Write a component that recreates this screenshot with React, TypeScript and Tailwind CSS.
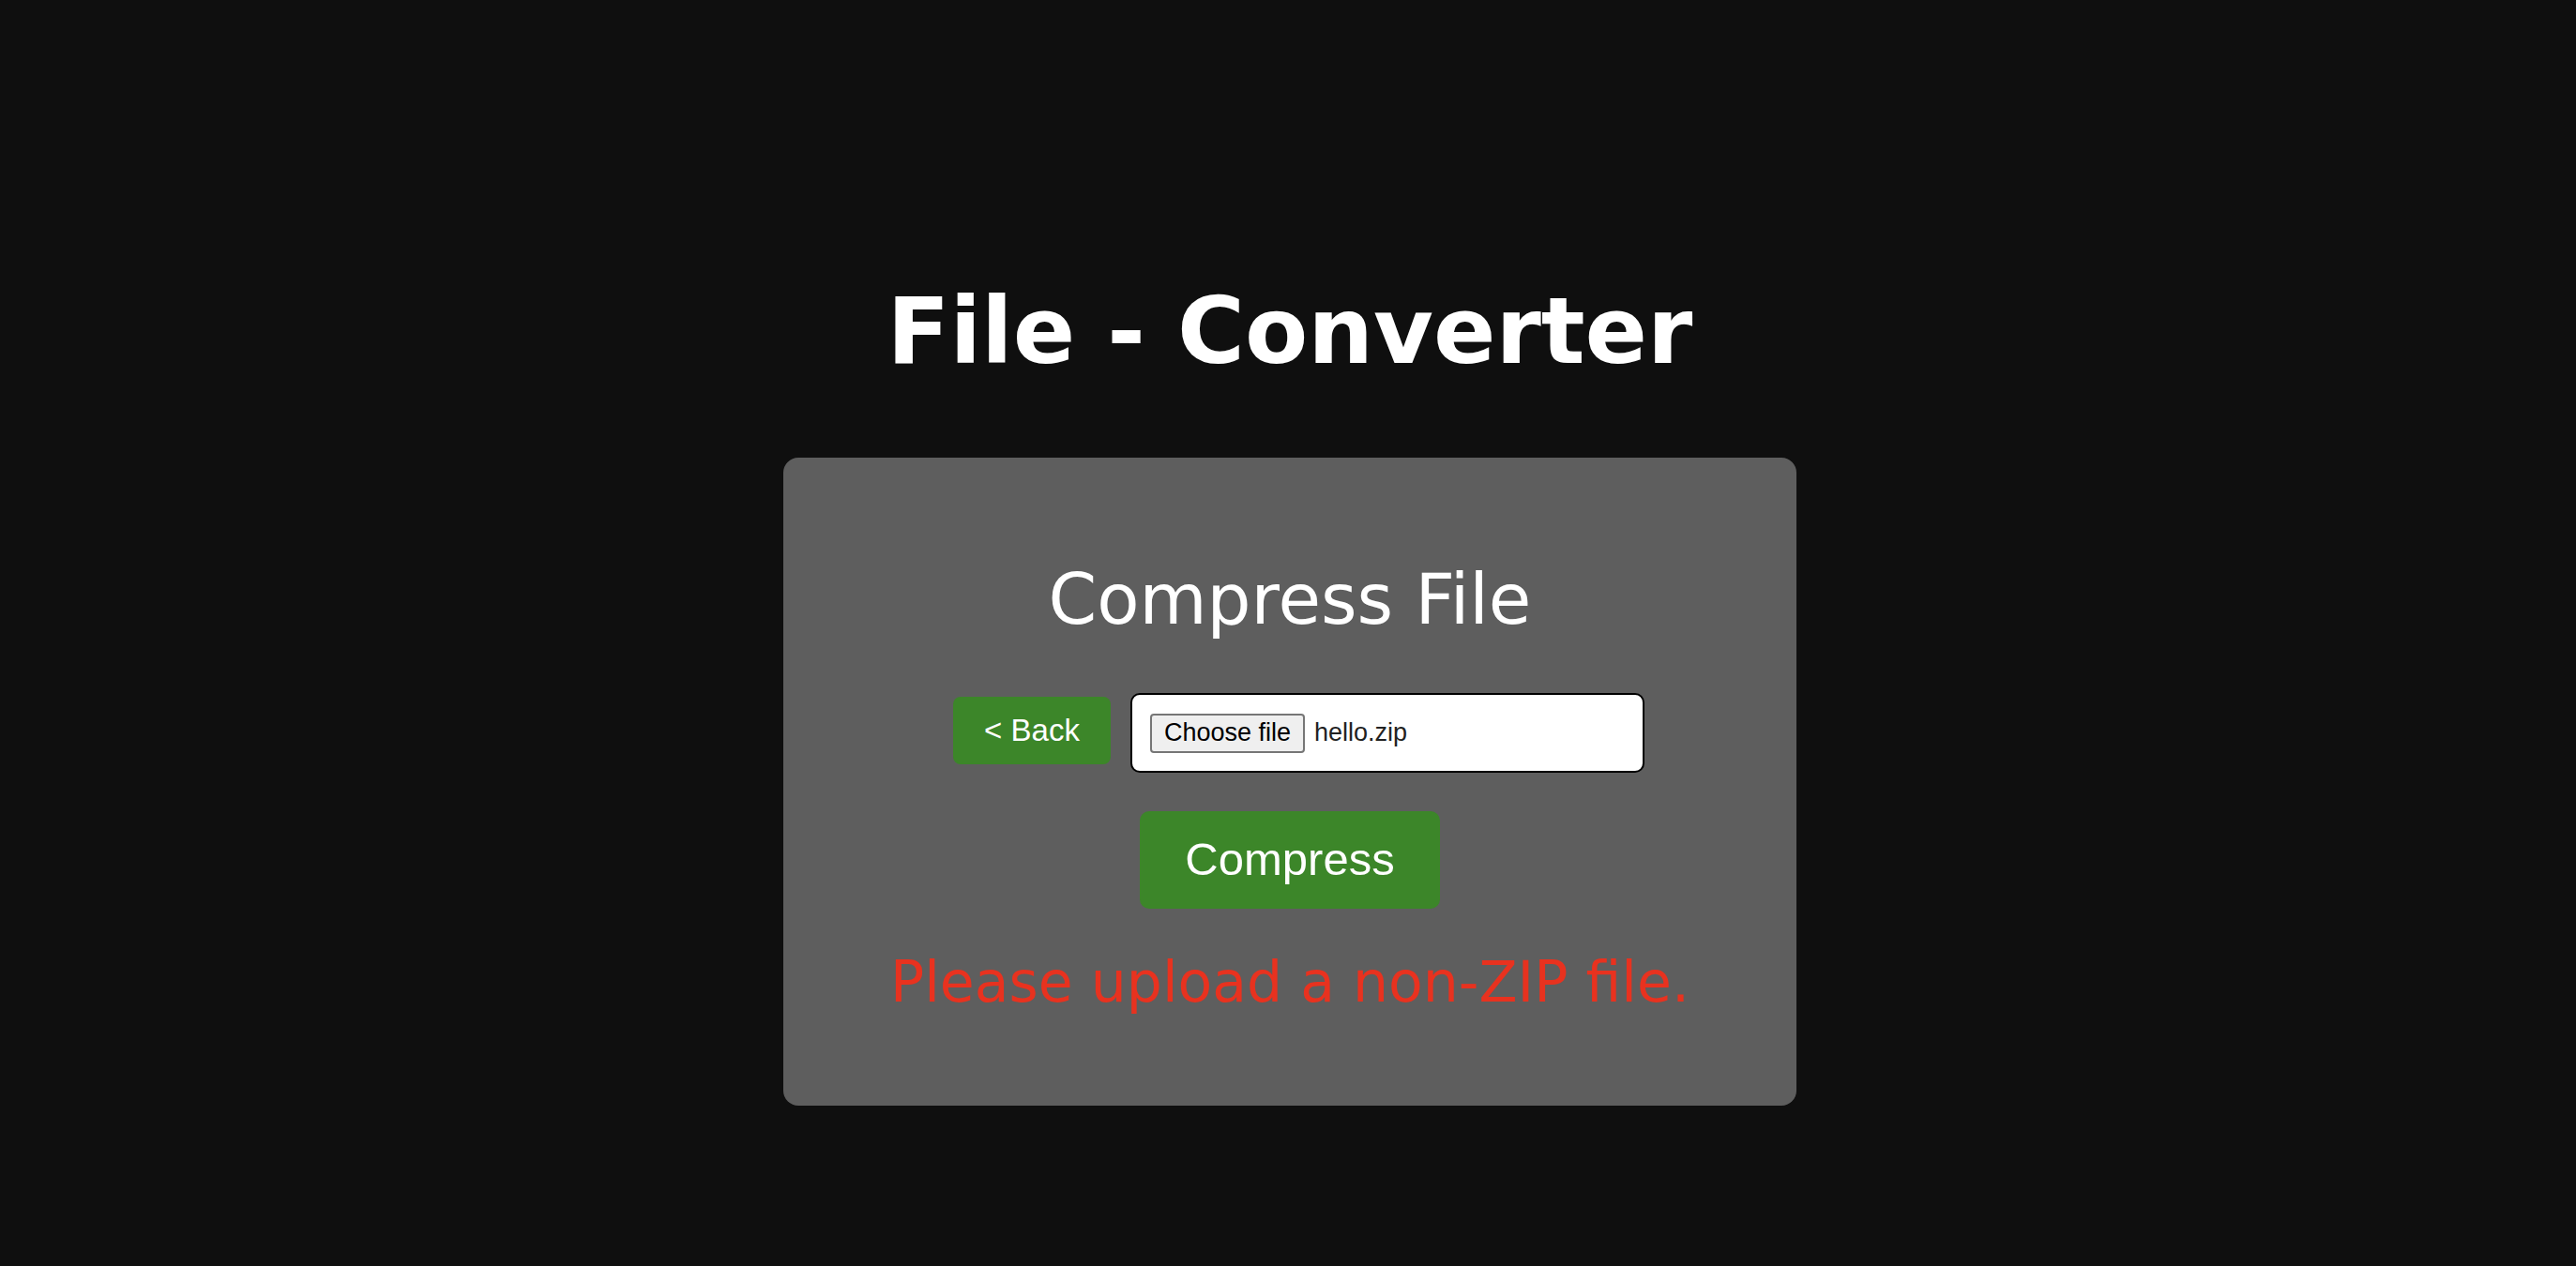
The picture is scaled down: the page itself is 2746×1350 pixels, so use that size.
export default function App() {
  return (
    <div className="min-h-[1350px] w-full bg-[#0f0f0f] pt-[304px] pl-[4px] flex flex-col items-center">
      <h1 className="text-[98px] leading-none font-bold text-white font-['DejaVu_Sans',sans-serif]">
        File - Converter
      </h1>

      <div className="mt-[86px] w-[1080px] rounded-[16px] bg-[#5e5e5e] pt-[114px] pb-[102px] flex flex-col items-center">
        <h2 className="text-[74px] leading-none text-white font-['DejaVu_Sans',sans-serif]">Compress File</h2>

        <div className="mt-[63px] flex items-start gap-[21px] pl-[19px]">
          <button className="mt-[4px] h-[72px] w-[168px] rounded-[8px] bg-[#3c8629] text-[33px] text-white font-['Liberation_Sans',Arial,sans-serif]">
            &lt; Back
          </button>
          <div className="flex h-[85px] w-[548px] items-center rounded-[10px] border-2 border-black bg-white pl-[19px]">
            <span className="flex h-[42px] w-[165px] items-center justify-center rounded-[4px] border-2 border-[#767676] bg-[#efefef] text-[27px] text-black font-['Liberation_Sans',Arial,sans-serif]">
              Choose file
            </span>
            <span className="ml-[10px] text-[27px] text-[#222] font-['Liberation_Sans',Arial,sans-serif]">hello.zip</span>
          </div>
        </div>

        <button className="mt-[41px] h-[104px] w-[320px] rounded-[10px] bg-[#3c8629] text-[49px] text-white font-['Liberation_Sans',Arial,sans-serif]">
          Compress
        </button>

        <p className="mt-[48px] text-[60px] leading-none text-[#e8321f] font-['DejaVu_Sans',sans-serif]">
          Please upload a non-ZIP file.
        </p>
      </div>
    </div>
  );
}
